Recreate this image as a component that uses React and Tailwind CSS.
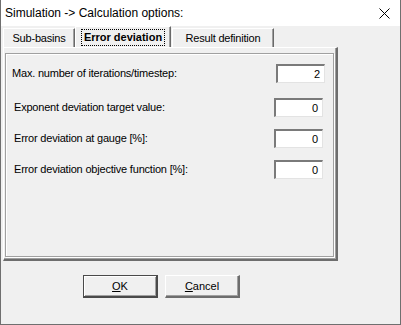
import React from "react";

const font = { fontFamily: '"Liberation Sans", Arial, sans-serif' };

const Field = ({ label, value, className = "", labelPad = "pl-[8px]" }) => (
  <div className={`flex items-center justify-between ${className}`}>
    <span className={`${labelPad} tracking-[-0.2px]`}>{label}</span>
    <div className="flex items-center justify-end w-[49px] h-[19px] pr-[4px] bg-white border-t-2 border-l-2 border-t-[#7a7a7a] border-l-[#7a7a7a] border-b border-r border-b-[#e3e3e3] border-r-[#e3e3e3]">
      {value}
    </div>
  </div>
);

const App = () => {
  return (
    <div
      className="w-[401px] h-[325px] bg-[#f0f0f0] border-l border-r border-b border-[#6f6f6f] overflow-hidden text-[11px] text-black"
      style={font}
    >
      {/* Title bar */}
      <div className="flex items-center h-[26px] bg-white pl-[4px] pr-[10px]">
        <span className="text-[12px] text-black">Simulation -&gt; Calculation options:</span>
        <svg className="ml-auto" width="11" height="11" viewBox="0 0 11 11">
          <path d="M0.5 0.5 L10.5 10.5 M10.5 0.5 L0.5 10.5" stroke="#000" strokeWidth="1" />
        </svg>
      </div>

      {/* Tabs */}
      <div className="flex items-end h-[21px] ml-[2px] tracking-[-0.2px]">
        <div className="flex items-center justify-center w-[72px] h-[19px] border-t border-l border-white border-r border-r-[#696969] shadow-[inset_-1px_0_0_#a0a0a0]">
          Sub-basins
        </div>
        <div className="flex items-center justify-center w-[96px] h-[21px] border-t border-l border-white border-r border-r-[#696969] shadow-[inset_-1px_0_0_#a0a0a0]">
          <span className="font-bold border border-dotted border-black px-[2px] leading-[15px] tracking-normal">Error deviation</span>
        </div>
        <div className="flex items-center justify-center w-[102px] h-[19px] ml-[1px] border-t border-l border-white border-r border-r-[#696969] shadow-[inset_-1px_0_0_#a0a0a0]">
          Result definition
        </div>
      </div>

      {/* Panel */}
      <div className="ml-[2px] w-[335px] h-[214px] border-t border-l border-white border-r-2 border-b-2 border-r-[#6d6d6d] border-b-[#6d6d6d] shadow-[inset_-1px_-1px_0_#a0a0a0] pt-[5px] pl-[1px] pr-[2px] pb-[2px]">
        <div className="h-full border border-[#a0a0a0] shadow-[1px_1px_0_#fff,inset_1px_1px_0_#fff] pt-[10px] pl-[6px] pr-[8px]">
          <Field label="Max. number of iterations/timestep:" value="2" labelPad="pl-0" className="pr-0" />
          <Field label="Exponent deviation target value:" value="0" labelPad="pl-[2px]" className="mt-[15px] pr-[2px]" />
          <Field label="Error deviation at gauge [%]:" value="0" labelPad="pl-[2px]" className="mt-[12px] pr-[2px]" />
          <Field label="Error deviation objective function [%]:" value="0" labelPad="pl-[2px]" className="mt-[12px] pr-[2px]" />
        </div>
      </div>

      {/* Buttons */}
      <div className="flex gap-[7px] ml-[82px] mt-[14px]">
        <button className="w-[75px] h-[23px] border border-[#4a4a4a] border-r-2 border-b-2 shadow-[inset_1px_1px_0_#fff,inset_-1px_-1px_0_#a0a0a0] flex items-center justify-center">
          <span>
            <span className="underline underline-offset-1">O</span>K
          </span>
        </button>
        <button className="w-[75px] h-[23px] border-t border-l border-white border-r-2 border-b-2 border-r-[#6d6d6d] border-b-[#6d6d6d] shadow-[inset_-1px_-1px_0_#a0a0a0] flex items-center justify-center">
          <span>
            <span className="underline underline-offset-1">C</span>ancel
          </span>
        </button>
      </div>
    </div>
  );
};

export default App;
